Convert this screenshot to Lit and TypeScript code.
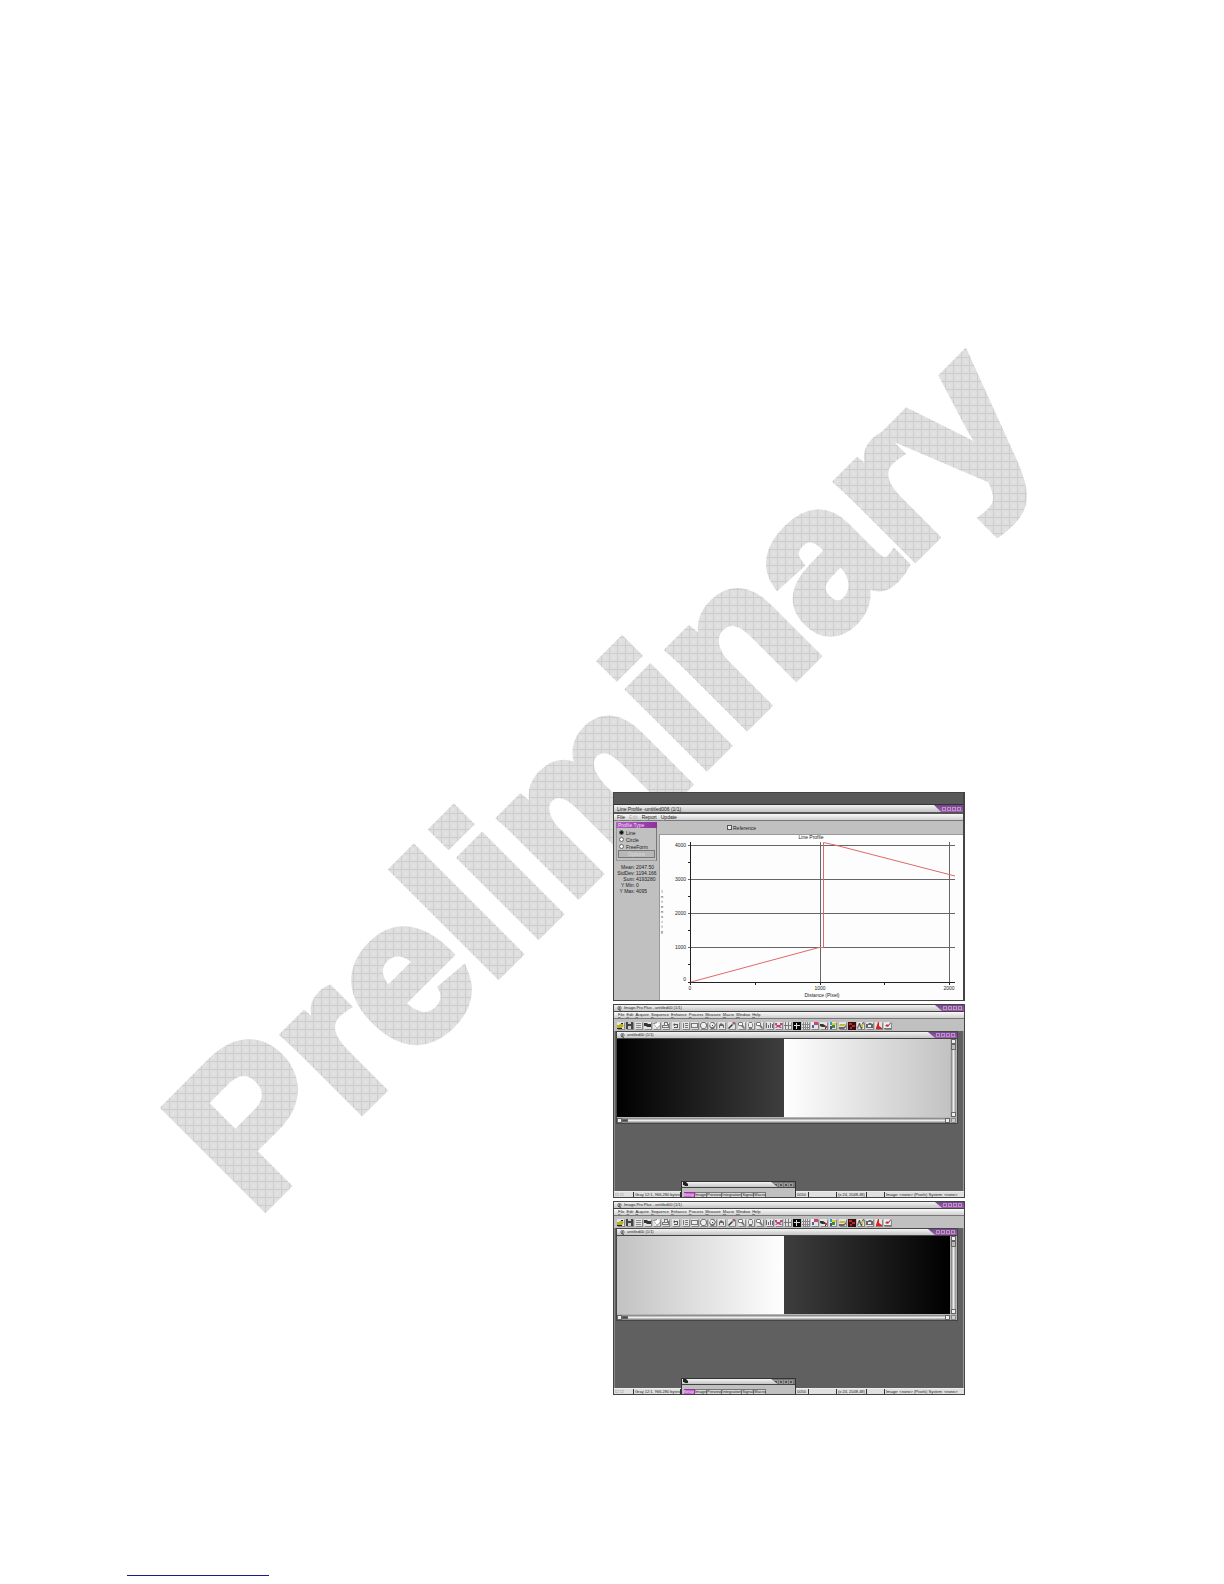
import { LitElement, html, css, svg } from "lit";
import { customElement, property } from "lit/decorators.js";

const UI_FONT = css`"Liberation Sans Narrow", "Liberation Sans", Arial, sans-serif`;

const shared = css`
  * { box-sizing: border-box; }
  :host { display: block; font-family: ${UI_FONT}; font-size: 5px; line-height: 6px; color: #222; }
  button, input { font: inherit; color: inherit; margin: 0; padding: 0; border: 0; background: none; }
  .title {
    display: flex; align-items: center; justify-content: space-between; height: 7px; padding-left: 3px;
    background: linear-gradient(#f4f4f4, #c4c4c4); border-bottom: 1px solid #444; white-space: nowrap; overflow: hidden;
  }
  .name { display: flex; align-items: center; gap: 2px; }
  .name svg { width: 5px; height: 5px; }
  .caps {
    display: flex; align-items: center; justify-content: flex-end; gap: 1px; width: 29px; height: 100%; padding-right: 2px;
    background: linear-gradient(#6d4a8c, #a35cb0); clip-path: polygon(0 0, 100% 0, 100% 100%, 7px 100%);
  }
  .caps button { width: 4px; height: 4px; border: 1px solid #c090c8; background: #8a5498; }
  .menu {
    display: flex; align-items: center; height: 7px; padding-left: 4px; gap: 2px;
    background: linear-gradient(#fafafa, #cfcfcf); border-bottom: 1px solid #777;
  }
  .menu button::first-letter { text-decoration: underline #888; }
`;

const caps = html`<div class="caps">
  <button aria-label="Roll up"></button><button aria-label="Minimize"></button><button aria-label="Maximize"></button><button aria-label="Close"></button>
</div>`;

const logo = html`<svg viewBox="0 0 5 5" aria-hidden="true"><circle cx="2.5" cy="2" r="1.6" fill="#fff" stroke="#333" stroke-width=".7"/><path d="M1 3l3 2M2.5 1v2" stroke="#333" stroke-width=".7"/></svg>`;

@customElement("line-profile")
class LineProfile extends LitElement {
  static styles = [shared, css`
    .window { border: 1px solid #444; border-right-width: 2px; background: #c0c0c0; }
    .backdrop { height: 12px; background: #595959; border-bottom: 1px solid #333; }
    .title { height: 9px; border-bottom: 2px solid #555; }
    .menu { gap: 4px; padding-left: 3px; }
    .dim { color: #aaa; }
    .body { display: grid; grid-template-columns: 45px 1fr; }
    .side { padding: 1px 2px 0; }
    .heading { height: 6px; padding-left: 2px; background: linear-gradient(90deg, #b060c0, #8d309e); color: #f4dcf8; }
    .types { display: grid; padding: 1px 0 2px 1px; border: 1px solid #999; border-top: 0; border-right-color: #777; }
    .types label { display: flex; align-items: center; gap: 2px; height: 7px; padding-left: 1px; }
    .types input { appearance: none; width: 5px; height: 5px; border: 1px solid #666; border-radius: 50%; background: #fff; }
    .types input:checked { background: #111; }
    .types button { height: 8px; margin: 0 1px 0 0; border: 1px solid #777; background: #b8b8b8; color: #ddd; line-height: 5px; }
    .stats { display: grid; grid-template-columns: 19px 1fr; column-gap: 1px; margin: 3px 0 0; white-space: nowrap; }
    .stats dt { justify-self: end; }
    .stats dd { margin: 0; }
    .reference { display: flex; align-items: center; gap: 1px; height: 13px; padding-left: 68px; }
    .reference input { appearance: none; width: 5px; height: 5px; border: 1px solid #555; background: #eee; }
    .plot { display: block; width: 100%; background: #fdfdfd; border: 1px solid #999; border-width: 1px 0 0 1px; }
    .grid { stroke: #666; stroke-width: 1; fill: none; }
    .axis { stroke: #222; stroke-width: 1; fill: none; }
    .curve { stroke: #e06868; stroke-width: 1; fill: none; }
    .plot text { font-size: 5px; fill: #222; }
    .end { text-anchor: end; }
    .mid { text-anchor: middle; }
    .plot .small { font-size: 4px; }
  `];
  render() {
    const ys = [4000, 3000, 2000, 1000];
    return html`<section class="window">
      <div class="backdrop"></div>
      <div class="title"><span>Line Profile -untitled006 (1/1)</span>${caps}</div>
      <nav class="menu"><button>File</button><button class="dim">Edit</button><button>Report</button><button>Update</button></nav>
      <div class="body">
        <div class="side">
          <div class="heading">Profile Type</div>
          <div class="types">
            <label><input type="radio" name="type" checked>Line</label>
            <label><input type="radio" name="type">Circle</label>
            <label><input type="radio" name="type">FreeForm</label>
            <button disabled>Options</button>
          </div>
          <dl class="stats">
            <dt>Mean:</dt><dd>2047.50</dd><dt>StdDev:</dt><dd>1194.166</dd><dt>Sum:</dt><dd>4193280</dd>
            <dt>Y Min:</dt><dd>0</dd><dt>Y Max:</dt><dd>4095</dd>
          </dl>
        </div>
        <div>
          <label class="reference"><input type="checkbox">Reference</label>
          <svg class="plot" viewBox="0 0 303 165" role="img" aria-label="Line Profile">
            <text class="mid" x="151" y="4">Line Profile</text>
            ${ys.map((v, i) => svg`<path class="grid" d="M28 ${10.5 + i * 34}H295"/><text class="end" x="26" y="${12 + i * 34}">${v}</text>`)}
            <path class="grid" d="M160.5 7V148M289.5 7V148"/>
            <path class="axis" d="M30.5 7V148M28 147.5H295M28 27.5h3M28 61.5h3M28 95.5h3M28 129.5h3M95.5 147v3M224.5 147v3M30.5 147v3M160.5 147v3M289.5 147v3"/>
            <path class="curve" d="M31 147L159 112.5H163.500V7.500L177 10.500L295 41"/>
            <text class="end" x="26" y="146">0</text>
            <text class="mid" x="30" y="155">0</text><text class="mid" x="160" y="155">1000</text><text class="mid" x="289" y="155">2000</text>
            <text class="mid" x="162" y="162">Distance (Pixel)</text>
            ${[..."Intensity"].map((c, i) => svg`<text class="small mid" x="2" y="${58 + i * 5}">${c}</text>`)}
          </svg>
        </div>
      </div>
    </section>`;
  }
}

type Icon = [string, string];
const line = (d: string, c = "#333"): Icon => [d, c];
const iconGroups: { name: string; art: Icon[] }[][] = [
  [
    { name: "Open", art: [["M0 3h2l1-1h3v1h1L5 6H0z", "#b9b21e"], ["M0 6h5v1H0zM4 1h2v1H4z", "#222"]] },
    { name: "Save", art: [["M0 0h7v7H0z", "#444"], ["M2 0h3v2H2zM2 4h3v3H2z", "#ccc"]] },
    { name: "List", art: [line("M1 1h5v1H1zM1 3h5v1H1zM1 5h5v1H1z", "#888")] },
    { name: "Camera", art: [line("M0 1h3l1 1h3v3H3L2 4H0z")] },
    { name: "Hand", art: [["M1 1l3-1 3 3-2 4-3-1z", "#fff"], line("M0 1l4-1v1L1 2l3 4 3-3v1L4 7z", "#777")] },
    { name: "Print", art: [line("M2 0h4v2h1v4H0V3h2z", "#777"), ["M3 1h2v2H3zM1 4h5v1H1z", "#eee"]] },
  ],
  [{ name: "Undo", art: [line("M1 3l2-2v1h3v4H2V5h3V3H3v1z", "#555")] }],
  [
    { name: "Counts", art: [line("M1 1h1v5H1zM3 1h3v1H3zM3 3h3v1H3zM3 5h3v1H3z", "#777")] },
    { name: "Rectangle", art: [line("M0 1h7v5H0z", "#777"), ["M1 2h5v3H1z", "#eee"]] },
    { name: "Ellipse", art: [line("M2 0h3l2 2v3L5 7H2L0 5V2z", "#777"), ["M2 1h3l1 2v1L5 6H2L1 4V3z", "#eee"]] },
    { name: "Freeform", art: [line("M2 0h3l2 3-2 4H2L0 4z", "#777"), ["M2 1h2l2 2-2 2H2L1 3z", "#eee"], line("M3 3h1v1H3z")] },
    { name: "Wand", art: [line("M1 3l2-2 3 2v3H5V4H2v2H1z", "#666")] },
  ],
  [{ name: "Pen", art: [line("M0 6l4-4 1 1-4 4z"), ["M5 0h2v2L6 3 4 1z", "#a06060"]] }],
  [
    { name: "Zoom in", art: [line("M1 0h3l1 1v2l2 3-1 1-3-3H1L0 3V1z", "#777"), ["M1 1h3v2H1z", "#fff"]] },
    { name: "Pan", art: [line("M1 3l1-3h3l1 3-1 4H2z", "#777"), ["M2 1h3v4H2z", "#eee"]] },
    { name: "Zoom out", art: [line("M1 0h3l1 1v2l2 3-1 1-3-3H1L0 3V1z", "#777"), ["M1 1h3v2H1z", "#fff"]] },
  ],
  [
    { name: "Levels", art: [line("M0 1h1v5H0zM2 3h1v3H2zM4 1h1v5H4zM6 2h1v4H6z", "#666")] },
    { name: "Contrast", art: [["M0 1h2v2h3V1h2v2L5 4l2 2H5L3 5 1 6H0l2-2-2-1z", "#c0427c"]] },
    { name: "Align", art: [line("M1 0h1v7H1zM4 0h1v7H4zM0 3h7v1H0z", "#777")] },
    { name: "Filter", art: [["M0 0h8v8H0z", "#080808"], ["M3 1h1v6H3zM1 3h6v1H1z", "#ddd"]] },
    { name: "Grid", art: [line("M1 0h1v7H1zM3 0h1v7H3zM5 0h1v7H5zM0 2h7v1H0zM0 5h7v1H0z", "#888")] },
    { name: "Color", art: [["M3 0h4v3H3z", "#d04070"], ["M0 0h3v3H0z", "#eee"], ["M1 3h2v3H1z", "#46a"]] },
    { name: "Segment", art: [line("M0 2h3l3 2v3H5V5H2L0 4z"), ["M5 4h2v2H5z", "#c33"]] },
    { name: "Palette", art: [["M1 0h2v3H1z", "#39c"], ["M3 1h4v2H3z", "#e8c832"], ["M3 3h3v3H3z", "#3a8c50"], ["M1 4h2v3H1z", "#456"]] },
  ],
  [
    { name: "Surface", art: [["M1 2h6L5 4H0z", "#c4b82c"], line("M0 5h5l2-2v2L5 7H0z", "#666")] },
    { name: "Mask", art: [["M0 0h8v8H0z", "#301010"], ["M1 1h3v2H1zM4 3h3v2H4zM2 5h2v2H2z", "#c02828"]] },
    { name: "Profile", art: [line("M0 6l2-5h1l1 3 2-4h1L5 7H4L2 3 1 7z", "#555"), ["M4 2h2v3H4z", "#cfc430"]] },
    { name: "Measure", art: [line("M0 2h2l1-1h2l1 1h1v4H0z", "#666"), ["M2 3h3v2H2z", "#eee"]] },
    { name: "Histogram", art: [["M1 6l2-6h1v4l3 2v1H1z", "#e02020"]] },
    { name: "Report", art: [["M0 1h6v5H0z", "#eee"], ["M1 4l2-2 1 1 3-3v1L4 5z", "#b04040"], line("M0 6h7v1H0z", "#777")] },
  ],
];

@customElement("image-window")
class ImageWindow extends LitElement {
  @property({ type: Boolean, reflect: true }) inverted = false;
  static styles = [shared, css`
    :host { font-size: 4px; }
    .window { border: 1px solid #444; background: #606060; position: relative; }
    .toolbar { display: flex; gap: 2px; height: 12px; padding: 3px 3px 1px; background: #c0c0c0; }
    .group { display: flex; gap: 1px; }
    .group button { width: 8px; height: 8px; background: #e4e4e4; border: 1px solid; border-color: #e4e4e4 #888 #888 #e4e4e4; line-height: 0; }
    .group svg { display: block; width: 8px; height: 8px; margin: -1px; }
    .space { padding: 0 5px 67px 1px; border-left: 1px solid #888; border-right: 1px solid #999; }
    .doc { border: 1px solid #444; background: #b4b4b4; }
    .view { display: grid; grid-template-columns: 1fr 6px; padding: 0 1px 0 0; }
    .ramp { height: 78px; display: grid; grid-template-columns: 1fr 1fr; }
    .dark { background: linear-gradient(90deg, #000, #3e3e3e); }
    .light { background: linear-gradient(90deg, #fff, #c2c2c2); }
    .inverted .light { background: linear-gradient(90deg, #c2c2c2, #fff); }
    .inverted .dark { background: linear-gradient(90deg, #3e3e3e, #000); }
    .vscroll, .hscroll { display: flex; justify-content: space-between; background: linear-gradient(90deg, #777, #eee, #888); }
    .vscroll { flex-direction: column; margin-left: 1px; }
    .vscroll i, .hscroll i { flex: 1; }
    .vscroll button, .hscroll button { width: 5px; height: 5px; background: #eee; border: 1px solid #666; }
    .vscroll .thumb { height: 6px; background: #bbb; }
    .hscroll { height: 5px; margin-top: 1px; background: linear-gradient(#777, #eee, #777); }
    .hscroll .thumb { background: #444; width: 6px; height: 3px; margin-top: 1px; }
    .corner { background: #ccc; margin: 1px 0 0 1px; border: 1px solid #888; }
    .status { display: grid; grid-template-columns: 20px 47px 128px 28px 30px 18px 1fr; height: 6px; background: #e0e0e0; border-top: 1px solid #eee; white-space: nowrap; line-height: 5px; }
    .status span { border-right: 1px solid #333; padding-left: 1px; }
    .status span:first-child { color: #777; }
    .status span:nth-child(3) { text-align: right; padding-right: 2px; }
    .status span:last-child { border: 0; }
    .panel { position: absolute; left: 19%; bottom: 0; width: 33%; background: #c0c0c0; border: 1px solid #333; border-bottom: 0; }
    .panel .title { height: 6px; color: #aaa; padding-left: 1px; }
    .panel .caps { background: #777; width: 24px; }
    .panel .caps button { background: #555; border-color: #999; }
    .tabs { display: flex; padding: 4px 0 0 2px; height: 9px; }
    .tabs button { height: 5px; line-height: 4px; border: 1px solid #777; border-width: 1px 1px 0 0; background: #d8d8d8; }
    .tabs .on { background: #c468d4; color: #f4d8f8; border-color: #93a; }
  `];
  render() {
    const dark = html`<div class="dark"></div>`;
    const light = html`<div class="light"></div>`;
    return html`<section class="window ${this.inverted ? "inverted" : ""}">
      <div class="title"><span class="name">${logo}Image-Pro Plus - untitled00 (1/1)</span>${caps}</div>
      <nav class="menu">${["File", "Edit", "Acquire", "Sequence", "Enhance", "Process", "Measure", "Macro", "Window", "Help"].map(m => html`<button>${m}</button>`)}</nav>
      <div class="toolbar">${iconGroups.map(g => html`<div class="group">${g.map(b => html`<button aria-label=${b.name}><svg viewBox="0 0 8 8">${b.art.map(([d, c]) => svg`<path d=${d} fill=${c}/>`)}</svg></button>`)}</div>`)}</div>
      <div class="space">
        <div class="doc">
          <div class="title"><span class="name">${logo}untitled00 (1/1)</span>${caps}</div>
          <div class="view">
            <div class="ramp">${this.inverted ? [light, dark] : [dark, light]}</div>
            <div class="vscroll"><button aria-label="Up"></button><button class="thumb" aria-label="Scroll"></button><i></i><button aria-label="Down"></button></div>
            <div class="hscroll"><button aria-label="Left"></button><button class="thumb" aria-label="Scroll"></button><i></i><button aria-label="Right"></button></div>
            <div class="corner"></div>
          </div>
        </div>
      </div>
      <div class="status"><span>☐ ☐</span><span>Gray 12:1, 966.280 bytes)</span><span>0050</span><span></span><span>(x:24, 2048.48)</span><span></span><span>Image: &lt;none&gt; (Pixels) System: &lt;none&gt;</span></div>
      <div class="panel">
        <div class="title"><span class="name"><svg viewBox="0 0 5 5"><path d="M0 0h3l2 2v2H2L1 3H0z" fill="#222"/></svg></span>${caps}</div>
        <div class="tabs"><button class="on">Setup</button><button>Image</button><button>Preview</button><button>Integration</button><button>Signal</button><button>Macro</button></div>
      </div>
    </section>`;
  }
}

@customElement("app-root")
class AppRoot extends LitElement {
  static styles = css`
    :host { display: block; background: #fff; }
    .page { position: relative; display: grid; grid-template-columns: 613fr 352fr 259fr; padding-top: 792px; overflow: hidden; }
    .mark { position: absolute; inset: 0 0 auto; width: 100%; height: auto; }
    .mark text { font: bold 204px "Liberation Sans", Arial, sans-serif; fill: url(#weave); stroke: url(#weave); stroke-width: 9px; }
    .figures { grid-column: 2; display: grid; grid-template-columns: minmax(0, 1fr); gap: 3px; position: relative; }
    .foot { grid-column: 1 / -1; padding: 159px 0 8px 127px; position: relative; }
    .foot a { display: block; width: 142px; height: 21px; border-bottom: 1px solid #1a1a8c; }
  `;
  render() {
    return html`<main class="page">
      <svg class="mark" viewBox="0 0 1224 1584">
        <defs><pattern id="weave" width="8" height="8" patternUnits="userSpaceOnUse" patternTransform="rotate(45)">
          <rect width="8" height="8" fill="#dfdfdf"/>
          <path d="M0 .5H8M.5 0V8" stroke="#cdcdcd" stroke-width="1"/>
          <path d="M4 4h1v1H4z" fill="#f0f0f0"/>
        </pattern></defs>
        <text transform="translate(265 1213) rotate(-45)" x="-9" y="-4">Preliminary</text>
      </svg>
      <div class="figures">
        <line-profile></line-profile>
        <image-window></image-window>
        <image-window inverted></image-window>
      </div>
      <footer class="foot"><a href="#" aria-label="Link"></a></footer>
    </main>`;
  }
}
